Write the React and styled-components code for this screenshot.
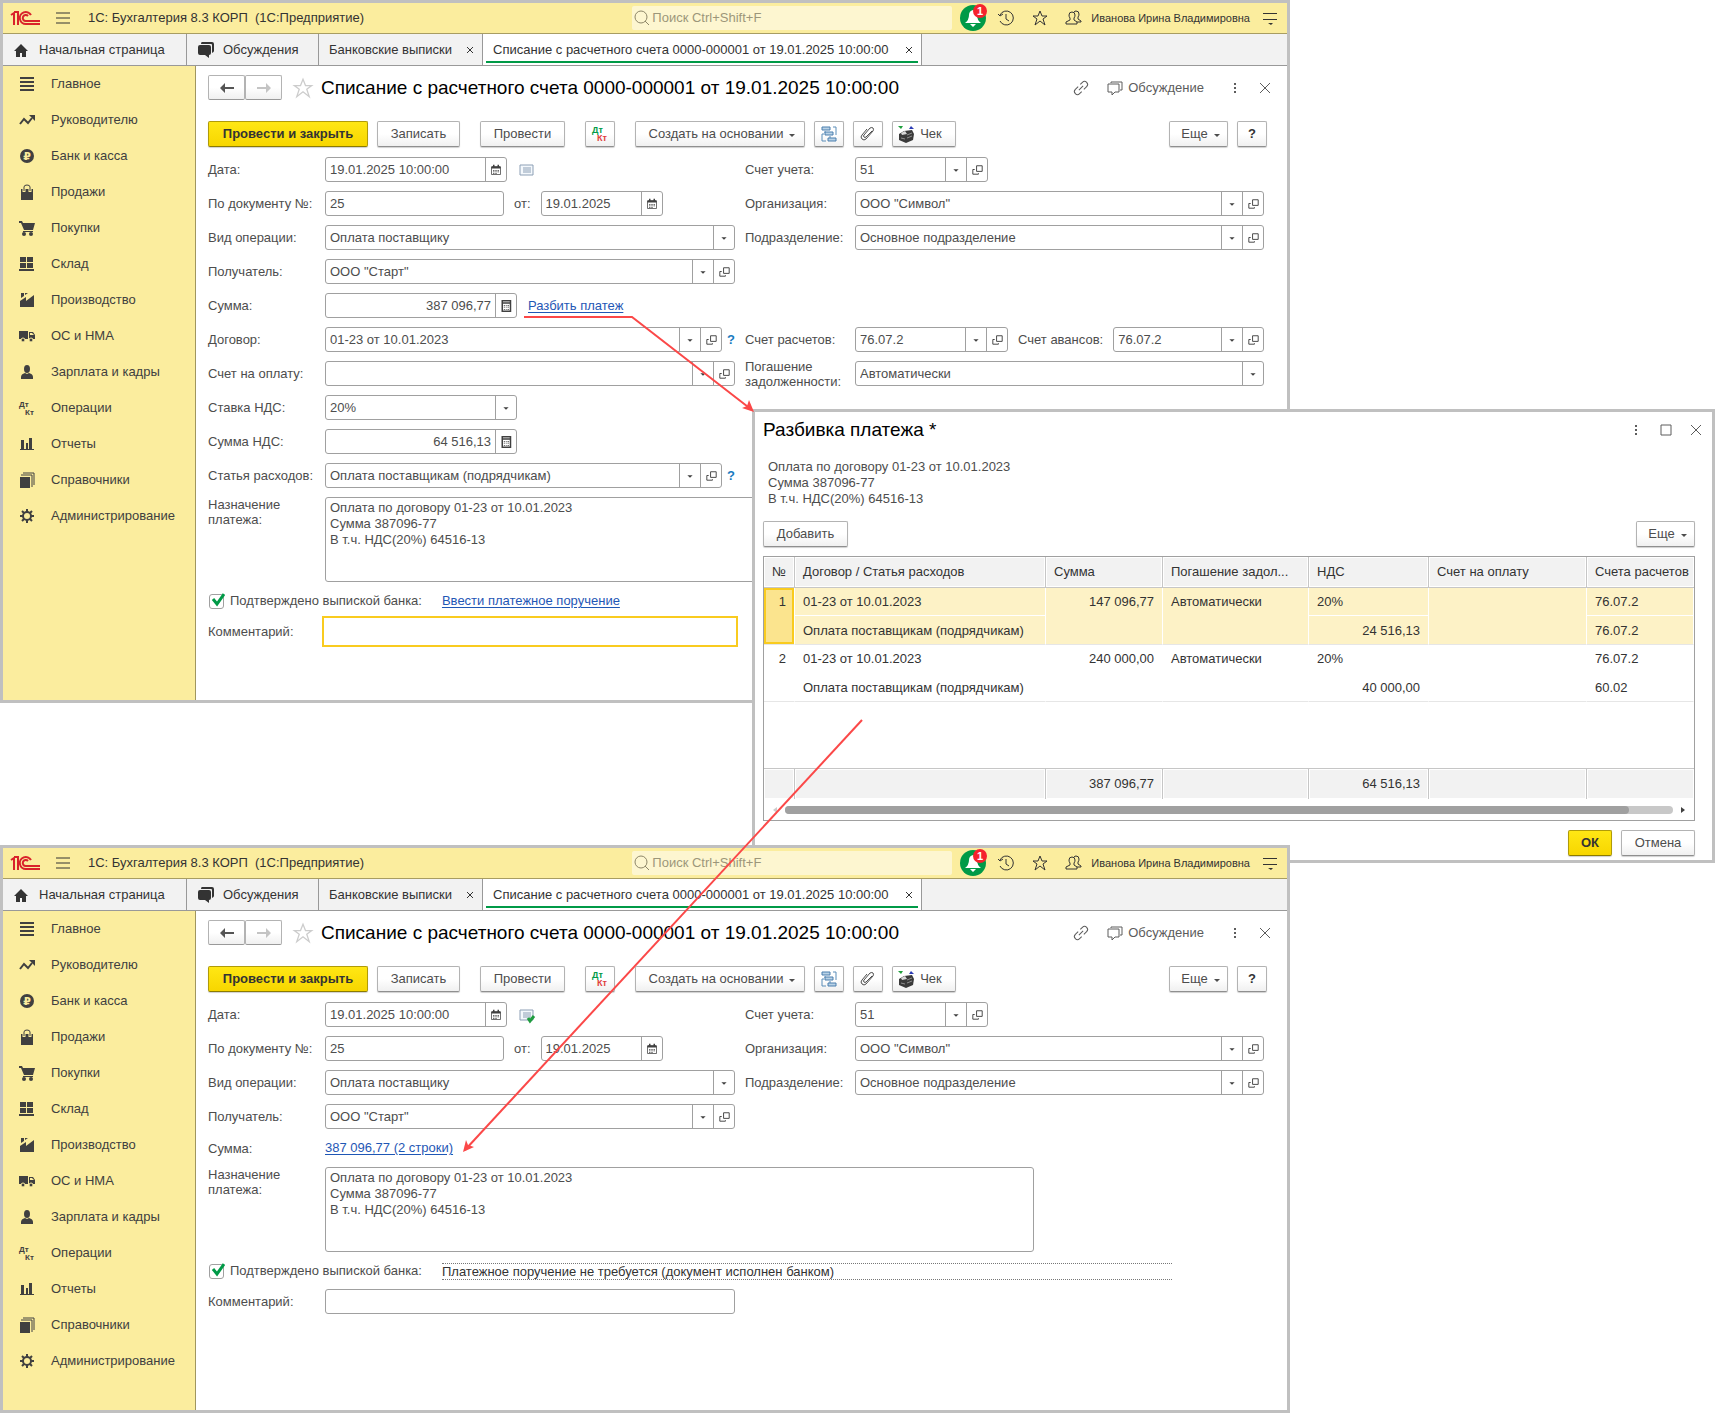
import React, { useId } from "react";
import styled, { createGlobalStyle, css } from "styled-components";

const sections = [
  { icon: "list", title: "Главное" },
  { icon: "trend", title: "Руководителю" },
  { icon: "ruble", title: "Банк и касса" },
  { icon: "bag", title: "Продажи" },
  { icon: "cart", title: "Покупки" },
  { icon: "store", title: "Склад" },
  { icon: "factory", title: "Производство" },
  { icon: "truck", title: "ОС и НМА" },
  { icon: "person", title: "Зарплата и кадры" },
  { icon: "dtkt", title: "Операции" },
  { icon: "bars", title: "Отчеты" },
  { icon: "books", title: "Справочники" },
  { icon: "gear", title: "Администрирование" },
];

const docTitle = "Списание с расчетного счета 0000-000001 от 19.01.2025 10:00:00";
const purpose = "Оплата по договору 01-23 от 10.01.2023\nСумма 387096-77\nВ т.ч. НДС(20%) 64516-13";

const splitRows = [
  { n: 1, contract: "01-23 от 10.01.2023", item: "Оплата поставщикам (подрядчикам)", sum: "147 096,77", repay: "Автоматически", rate: "20%", vat: "24 516,13", acc: "76.07.2", adv: "76.07.2" },
  { n: 2, contract: "01-23 от 10.01.2023", item: "Оплата поставщикам (подрядчикам)", sum: "240 000,00", repay: "Автоматически", rate: "20%", vat: "40 000,00", acc: "76.07.2", adv: "60.02" },
];

/* ---------- icons ---------- */

const shapes = {
  list: <path d="M1 1h14v2H1zM1 5h14v2H1zM1 9h14v2H1zM1 13h14v2H1z" />,
  trend: (
    <>
      <path d="M1 12l4-5 4 4 4-5" fill="none" stroke="currentColor" strokeWidth="2" />
      <path d="M10 3h6v6z" />
    </>
  ),
  ruble: (
    <>
      <circle cx="8" cy="8" r="7" />
      <text x="8" y="12" textAnchor="middle" fontSize="11" fontWeight="bold" fontFamily="DejaVu Sans, sans-serif" fill="#fbed9e">₽</text>
    </>
  ),
  bag: (
    <>
      <path d="M2 5h12v11H2z" />
      <path d="M5 8V3q0-2 3-2t3 2v5" fill="none" stroke="#fbed9e" strokeWidth="3" />
      <path d="M5 7V3q0-2 3-2t3 2v4" fill="none" stroke="currentColor" strokeWidth="1" />
    </>
  ),
  cart: (
    <>
      <path d="M0 1h3l1 2h12l-2 7H5L2 3H0z" />
      <path d="M4 11h10v1H4z" />
      <circle cx="5" cy="14" r="2" />
      <circle cx="12" cy="14" r="2" />
    </>
  ),
  store: <path d="M1 1h6v5H1zM8 1h6v5H8zM1 7h6v5H1zM8 7h6v5H8zM0 13h15v2H0z" />,
  factory: <path d="M1 15V9l6-4v4l8-6v12zM2 1h3v3L2 6zM6 1h3L6 3z" />,
  truck: (
    <>
      <path d="M0 3h9v8H0zM10 4h4l2 3v4h-6z" />
      <path d="M11 5h2l2 2h-4z" fill="#fbed9e" />
      <circle cx="4" cy="12" r="2" stroke="#fbed9e" />
      <circle cx="12" cy="12" r="2" stroke="#fbed9e" />
    </>
  ),
  person: (
    <>
      <ellipse cx="8" cy="5" rx="3" ry="4" />
      <path d="M2 15v-2q0-3 4-4l2 1 2-1q4 1 4 4v2z" />
    </>
  ),
  dtkt: (
    <g fontSize="8" fontWeight="bold" fontFamily="Liberation Sans, sans-serif">
      <text x="0" y="7">Дт</text>
      <text x="6" y="15">Кт</text>
    </g>
  ),
  bars: <path d="M2 4h3v9H2zM7 7h2v6H7zM10 2h3v11h-3zM1 13h14v1H1z" />,
  books: (
    <>
      <path d="M1 5h10v11H1z" />
      <path d="M2 3h11v12M4 1h11v12" fill="none" stroke="currentColor" />
    </>
  ),
  gear: (
    <g fill="none" stroke="currentColor">
      <circle cx="8" cy="8" r="4" strokeWidth="2" />
      <path d="M8 1v3M8 12v3M1 8h3M12 8h3M3 3l2 2M11 11l2 2M13 3l-2 2M3 13l2-2" strokeWidth="2" />
    </g>
  ),
  home: <path d="M8 2l7 7h-2v6H9v-4H7v4H3V9H1z" />,
  chats: (
    <>
      <path d="M5 0h10q2 0 2 2v7q0 1-2 2V3q0-1-1-1H4q0-2 1-2z" />
      <path d="M3 3h9q2 0 2 2v6q0 2-2 2v3l-4-3H3q-2 0-2-2V5q0-2 2-2z" />
    </>
  ),
  burger: <path d="M1 3h14M1 8h14M1 13h14" stroke="currentColor" />,
  search: <path d="M11 11l4 4M13 7A6 6 0 1 1 1 7a6 6 0 0 1 12 0z" fill="none" stroke="currentColor" />,
  history: (
    <g fill="none" stroke="currentColor">
      <path d="M2 5a7 7 0 1 1 0 6M8 4v5l3 2" />
      <path d="M0 4l2 2 3-2" />
    </g>
  ),
  star: <path d="M8 1l2 5h5l-4 3 2 6-5-4-5 4 2-6-4-3h5z" fill="none" stroke="currentColor" />,
  users: (
    <g fill="none" stroke="currentColor">
      <path d="M6 2q3 0 3 3 0 2-1 3v2l3 2v2H0v-2l4-2V8Q3 7 3 5q0-3 3-3z" />
      <path d="M8 2q1-1 2-1 3 0 3 3 0 2-1 3v2l3 2v1h-4" />
    </g>
  ),
  panel: <path d="M1 3h14v1H1zM1 9h14v1H1zM6 13h5l-2 2z" />,
  link: (
    <g fill="none" stroke="currentColor" transform="rotate(-45 8 8)">
      <path d="M7 5H3a3 3 0 0 0 0 6h3M9 11h4a3 3 0 0 0 0-6h-3M5 8h6" />
    </g>
  ),
  discuss: (
    <g fill="none" stroke="currentColor">
      <path d="M1 4h11v8H8l-3 3v-3H1z" />
      <path d="M4 3V2h11v8h-2" />
    </g>
  ),
  dots: <path d="M7 3h2v2H7zM7 7h2v2H7zM7 11h2v2H7z" />,
  close: <path d="M3 3l10 10M13 3L3 13" stroke="currentColor" />,
  cross: <path d="M5 5l6 6M11 5l-6 6" stroke="currentColor" />,
  square: <path d="M3 3h10v10H3z" fill="none" stroke="currentColor" />,
  left: <path d="M1 8l5-5v4h9v2H6v4z" />,
  right: <path d="M15 8l-5-5v4H1v2h9v4z" />,
  caret: <path d="M5 7h6l-3 3z" />,
  open: <path d="M7 4h6v6H7zM5 8H3v5h6v-1" fill="none" stroke="currentColor" />,
  calendar: (
    <>
      <path d="M2 4h12v10H2z" fill="none" stroke="currentColor" />
      <path d="M2 3h12v3H2zM4 1h2v3H4zM10 1h2v3h-2zM4 8h2v1H4zM7 8h2v1H7zM10 8h2v1h-2zM4 10h2v1H4zM7 10h2v1H7zM10 10h2v1h-2zM4 12h2v1H4zM7 12h2v1H7z" />
    </>
  ),
  calc: (
    <>
      <path d="M3 1h11v14H3z" fill="none" stroke="currentColor" strokeWidth="2" />
      <path d="M3 3h11v2H3zM5 7h2v1H5zM8 7h1v1H8zM10 7h2v1h-2zM5 9h2v1H5zM8 9h1v1H8zM10 9h2v1h-2zM5 12h2v1H5zM8 12h1v1H8zM10 12h2v1h-2z" />
    </>
  ),
  posting: (
    <g fill="none" stroke="#8c9fb5">
      <path d="M1 3h13v10H1z" fill="#f4f8fc" />
      <path d="M4 6h8M4 8h8M4 10h8" />
    </g>
  ),
  posted: (
    <g fill="none" stroke="#8c9fb5">
      <path d="M1 3h13v10H1z" fill="#f4f8fc" />
      <path d="M4 6h8M4 8h8M4 10h8" />
      <path d="M9 11l2 3 4-5" stroke="#1f9c3f" strokeWidth="3" />
    </g>
  ),
  structure: (
    <>
      <path d="M3 8H1v7h4M12 1h3v8M4 5v2M9 10v2" fill="none" stroke="#5b8db8" />
      <path d="M1 1h8v3H1zM4 6h8v3H4zM7 12h8v3H7z" fill="#b9d2e6" stroke="#4a7fae" />
    </>
  ),
  clip: (
    <path d="M12 5l-6 6q-1 1-2 0t0-2l6-7q2-1 3 0t0 3l-7 8q-2 2-4 0t0-4l5-6" fill="none" stroke="currentColor" />
  ),
  till: (
    <>
      <path d="M0 0h5L3 3z" fill="#1fa03c" />
      <path d="M11 3l2-3 3 3z" fill="#2b3bb5" />
      <path d="M1 8l5-3 8-1 2 4-1 6-7 3-7-3z" fill="#3a3a3a" />
      <path d="M3 7l4-2 2 3-5 1z" fill="#d8d8d8" />
      <path d="M9 9l5-2M9 12l5-2M3 12l4 1" stroke="#909090" />
    </>
  ),
};

const Svg = styled.svg`
  display: block;
  flex: none;
  fill: currentColor;
  overflow: visible;
`;

const Icon = ({ name, size = 16 }) => (
  <Svg width={size} height={size} viewBox="0 0 16 16" aria-hidden="true">
    {shapes[name]}
  </Svg>
);

const Logo = () => (
  <Svg width="30" height="16" viewBox="0 0 30 16" role="img" aria-label="1С">
    <g fill="none" stroke="#d9232b" strokeWidth="2">
      <path d="M0 5l3-2v12M3 2h4v13" />
      <path d="M20 5a6 6 0 1 0-5 9h14" />
      <path d="M17 6a3 3 0 1 0-2 5h14" />
    </g>
  </Svg>
);

const Bell = () => (
  <Svg width="28" height="30" viewBox="0 0 28 30" aria-hidden="true">
    <circle cx="13" cy="15" r="13" fill="#009a47" />
    <path d="M13 7q4 1 4 5 0 5 4 8H5q4-3 4-8 0-4 4-5zM10 21h6l-3 3z" fill="#fff" />
    <circle cx="20" cy="8" r="7" fill="#f5222d" />
    <text x="20" y="12" textAnchor="middle" fontSize="11" fontWeight="bold" fontFamily="Liberation Sans, sans-serif" fill="#fff">1</text>
  </Svg>
);

const DtKt = () => (
  <Svg width="16" height="16" viewBox="0 0 16 16" aria-hidden="true">
    <g fontSize="9" fontWeight="bold" fontFamily="Liberation Sans, sans-serif">
      <text x="0" y="7" fill="#009a47">Дт</text>
      <text x="5" y="15" fill="#e03c3c">Кт</text>
    </g>
  </Svg>
);

const Drop = () => (
  <DropSvg width="6" height="3" viewBox="0 0 6 3" aria-hidden="true">
    <path d="M0 0h6L3 3z" />
  </DropSvg>
);

/* ---------- form parts ---------- */

const Pick = ({ id, value, grow, w, open = true }) => (
  <Box $grow={grow} $w={w}>
    <Select id={id} defaultValue={value}>
      <option>{value}</option>
    </Select>
    <Segment as="span"><Icon name="caret" size={14} /></Segment>
    {open && <Segment type="button" aria-label="Открыть"><Icon name="open" size={15} /></Segment>}
  </Box>
);

const Entry = ({ id, value, w, icon, label, right }) => (
  <Box $w={w}>
    <Input id={id} defaultValue={value} $right={right} />
    {icon && <Segment type="button" aria-label={label}><Icon name={icon} size={12} /></Segment>}
  </Box>
);

const Footer = ({ id, confirm, focused }) => (
  <>
    <Row $top>
      <Label htmlFor={`${id}-purpose`}>Назначение платежа:</Label>
      <Purpose id={`${id}-purpose`} defaultValue={purpose} />
    </Row>
    <Confirm>
      <CheckLabel>
        <CheckBox type="checkbox" defaultChecked />
        <Mark width="15" height="15" viewBox="0 0 15 15" aria-hidden="true">
          <path d="M3 6l4 5 7-10" fill="none" stroke="#009a47" strokeWidth="3" />
        </Mark>
        Подтверждено выпиской банка:
      </CheckLabel>
      {confirm}
    </Confirm>
    <Row>
      <Label htmlFor={`${id}-comment`}>Комментарий:</Label>
      <Comment id={`${id}-comment`} $focused={focused} />
    </Row>
  </>
);

const Fields = ({ split }) => {
  const id = useId();
  return (
    <form>
      <Grid>
        <Row>
          <Label htmlFor={`${id}-date`}>Дата:</Label>
          <Entry id={`${id}-date`} value="19.01.2025 10:00:00" w={182} icon="calendar" label="Выбрать дату" />
          <State><Icon name={split ? "posted" : "posting"} /></State>
        </Row>
        <Row $col={2} $row={1}>
          <Label htmlFor={`${id}-acc`} $narrow>Счет учета:</Label>
          <Pick id={`${id}-acc`} value="51" w={133} />
        </Row>
        <Row>
          <Label htmlFor={`${id}-num`}>По документу №:</Label>
          <Entry id={`${id}-num`} value="25" w={179} />
          <InlineLabel htmlFor={`${id}-from`}>от:</InlineLabel>
          <Entry id={`${id}-from`} value="19.01.2025" w={122} icon="calendar" label="Выбрать дату" />
        </Row>
        <Row $col={2} $row={2}>
          <Label htmlFor={`${id}-org`} $narrow>Организация:</Label>
          <Pick id={`${id}-org`} value={'ООО "Символ"'} grow />
        </Row>
        <Row>
          <Label htmlFor={`${id}-kind`}>Вид операции:</Label>
          <Pick id={`${id}-kind`} value="Оплата поставщику" grow open={false} />
        </Row>
        <Row $col={2} $row={3}>
          <Label htmlFor={`${id}-dep`} $narrow>Подразделение:</Label>
          <Pick id={`${id}-dep`} value="Основное подразделение" grow />
        </Row>
        <Row>
          <Label htmlFor={`${id}-payee`}>Получатель:</Label>
          <Pick id={`${id}-payee`} value={'ООО "Старт"'} grow />
        </Row>
        {split ? (
          <Row $short>
            <Label as="span">Сумма:</Label>
            <Link href="#split">387 096,77 (2 строки)</Link>
          </Row>
        ) : (
          <>
            <Row>
              <Label htmlFor={`${id}-sum`}>Сумма:</Label>
              <Entry id={`${id}-sum`} value="387 096,77" w={192} icon="calc" label="Калькулятор" right />
              <Gap />
              <Link href="#split">Разбить платеж</Link>
            </Row>
            <Row>
              <Label htmlFor={`${id}-contract`}>Договор:</Label>
              <Pick id={`${id}-contract`} value="01-23 от 10.01.2023" grow />
              <Hint type="button">?</Hint>
            </Row>
            <Row $col={2} $row={6}>
              <Label htmlFor={`${id}-settle`} $narrow>Счет расчетов:</Label>
              <Pick id={`${id}-settle`} value="76.07.2" w={153} />
              <InlineLabel htmlFor={`${id}-advance`}>Счет авансов:</InlineLabel>
              <Pick id={`${id}-advance`} value="76.07.2" grow />
            </Row>
            <Row>
              <Label htmlFor={`${id}-bill`}>Счет на оплату:</Label>
              <Pick id={`${id}-bill`} value="" grow />
            </Row>
            <Row $col={2} $row={7}>
              <Label htmlFor={`${id}-repay`} $narrow>Погашение задолженности:</Label>
              <Pick id={`${id}-repay`} value="Автоматически" grow open={false} />
            </Row>
            <Row>
              <Label htmlFor={`${id}-rate`}>Ставка НДС:</Label>
              <Pick id={`${id}-rate`} value="20%" w={192} open={false} />
            </Row>
            <Row>
              <Label htmlFor={`${id}-vat`}>Сумма НДС:</Label>
              <Entry id={`${id}-vat`} value="64 516,13" w={192} icon="calc" label="Калькулятор" right />
            </Row>
            <Row>
              <Label htmlFor={`${id}-item`}>Статья расходов:</Label>
              <Pick id={`${id}-item`} value="Оплата поставщикам (подрядчикам)" grow />
              <Hint type="button">?</Hint>
            </Row>
          </>
        )}
      </Grid>
      <Footer
        id={id}
        focused={!split}
        confirm={
          split ? (
            <Dotted>Платежное поручение не требуется (документ исполнен банком)</Dotted>
          ) : (
            <Link href="#order">Ввести платежное поручение</Link>
          )
        }
      />
    </form>
  );
};

/* ---------- windows ---------- */

const MainWindow = ({ area, split }) => (
  <Window $area={area} $layer={split ? 3 : 1}>
    <TopBar>
      <Logo />
      <Plain type="button" aria-label="Меню"><Icon name="burger" /></Plain>
      <AppName>1С: Бухгалтерия 8.3 КОРП&nbsp; (1С:Предприятие)</AppName>
      <Search>
        <Icon name="search" />
        <SearchInput placeholder="Поиск Ctrl+Shift+F" aria-label="Поиск" />
      </Search>
      <Plain type="button" aria-label="Уведомления"><Bell /></Plain>
      <TopTools>
        <Plain type="button" aria-label="История"><Icon name="history" /></Plain>
        <Plain type="button" aria-label="Избранное"><Icon name="star" /></Plain>
        <Plain type="button" aria-label="Пользователи"><Icon name="users" /></Plain>
      </TopTools>
      <User>Иванова Ирина Владимировна</User>
      <Plain type="button" aria-label="Панели"><Icon name="panel" /></Plain>
    </TopBar>
    <Tabs>
      <Tab type="button" $w={184}><Icon name="home" />Начальная страница</Tab>
      <Tab type="button" $w={132}><Icon name="chats" />Обсуждения</Tab>
      <Tab type="button" $w={161} $doc>Банковские выписки<Icon name="cross" /></Tab>
      <Tab type="button" $w={439} $doc $active>{docTitle}<Icon name="cross" /></Tab>
    </Tabs>
    <Main>
      <Sidebar>
        {sections.map((s) => (
          <Section key={s.title} href="#section">
            <Icon name={s.icon} />
            {s.title}
          </Section>
        ))}
      </Sidebar>
      <Page>
        <Heading>
          <Nav>
            <NavButton type="button" aria-label="Назад"><Icon name="left" /></NavButton>
            <NavButton type="button" aria-label="Вперед" $off><Icon name="right" /></NavButton>
          </Nav>
          <Fav type="button" aria-label="В избранное"><Icon name="star" size={20} /></Fav>
          <Title>{docTitle}</Title>
          <HeadTools>
            <Plain type="button" aria-label="Ссылка"><Icon name="link" /></Plain>
            <Plain type="button"><Icon name="discuss" />Обсуждение</Plain>
          </HeadTools>
          <WindowTools>
            <Plain type="button" aria-label="Еще"><Icon name="dots" /></Plain>
            <Plain type="button" aria-label="Закрыть"><Icon name="close" /></Plain>
          </WindowTools>
        </Heading>
        <Toolbar>
          <Group>
            <Button type="button" $w={160} $primary>Провести и закрыть</Button>
            <Button type="button" $w={83}>Записать</Button>
          </Group>
          <Button type="button" $w={85}>Провести</Button>
          <Button type="button" $w={30} aria-label="Дт/Кт"><DtKt /></Button>
          <Group>
            <Button type="button" $w={170} $drop>Создать на основании<Drop /></Button>
            <Button type="button" $w={30} aria-label="Структура"><Icon name="structure" /></Button>
            <Button type="button" $w={30} aria-label="Файлы"><Icon name="clip" /></Button>
            <Till type="button" $w={64}><Icon name="till" />Чек</Till>
          </Group>
          <Group $end>
            <Button type="button" $w={59} $drop>Еще<Drop /></Button>
            <Button type="button" $w={30} $bold>?</Button>
          </Group>
        </Toolbar>
        <Fields split={split} />
      </Page>
    </Main>
  </Window>
);

const SplitDialog = () => (
  <Window as="section" $area="2 / 2 / 5 / 4" $layer={2}>
    <DialogBody>
      <DialogHead>
        <Title>Разбивка платежа *</Title>
        <WindowTools>
          <Plain type="button" aria-label="Еще"><Icon name="dots" /></Plain>
          <Plain type="button" aria-label="Развернуть"><Icon name="square" /></Plain>
          <Plain type="button" aria-label="Закрыть"><Icon name="close" /></Plain>
        </WindowTools>
      </DialogHead>
      <Note>{purpose}</Note>
      <DialogBar>
        <Button type="button" $w={85}>Добавить</Button>
        <Button type="button" $w={59} $drop>Еще<Drop /></Button>
      </DialogBar>
      <TableFrame>
        <Table>
          <colgroup>
            <Col $w={31} />
            <Col $w={251} />
            <Col $w={117} />
            <Col $w={146} />
            <Col $w={120} />
            <Col $w={158} />
            <Col $w={107} />
          </colgroup>
          <thead>
            <tr>
              <Th>№</Th>
              <Th>Договор / Статья расходов</Th>
              <Th>Сумма</Th>
              <Th title="Погашение задолженности">Погашение задол...</Th>
              <Th>НДС</Th>
              <Th>Счет на оплату</Th>
              <Th>Счета расчетов</Th>
            </tr>
          </thead>
          <tbody>
            {splitRows.map((r) => {
              const on = r.n === 1;
              return (
                <React.Fragment key={r.n}>
                  <tr>
                    <Td rowSpan={2} $on={on} $right $last $current={on}>{r.n}</Td>
                    <Td $on={on}>{r.contract}</Td>
                    <Td rowSpan={2} $on={on} $right $last>{r.sum}</Td>
                    <Td rowSpan={2} $on={on} $last>{r.repay}</Td>
                    <Td $on={on}>{r.rate}</Td>
                    <Td rowSpan={2} $on={on} $last />
                    <Td $on={on}>{r.acc}</Td>
                  </tr>
                  <tr>
                    <Td $on={on} $last $low>{r.item}</Td>
                    <Td $on={on} $last $low $right>{r.vat}</Td>
                    <Td $on={on} $last $low>{r.adv}</Td>
                  </tr>
                </React.Fragment>
              );
            })}
            <tr>
              <Blank colSpan={7} />
            </tr>
          </tbody>
          <tfoot>
            <tr>
              <Total />
              <Total />
              <Total>387 096,77</Total>
              <Total />
              <Total>64 516,13</Total>
              <Total />
              <Total />
            </tr>
          </tfoot>
        </Table>
        <Scroll>
          <ScrollArrow $left $off />
          <Track><Thumb /></Track>
          <ScrollArrow />
        </Scroll>
      </TableFrame>
      <DialogButtons>
        <Button type="button" $w={44} $primary>ОК</Button>
        <Button type="button" $w={74}>Отмена</Button>
      </DialogButtons>
    </DialogBody>
  </Window>
);

const App = () => (
  <>
    <GlobalStyle />
    <Desktop>
      <MainWindow area="1 / 1 / 3 / 3" />
      <SplitDialog />
      <MainWindow area="4 / 1 / 6 / 3" split />
      <Arrows viewBox="0 0 1715 1413" preserveAspectRatio="none" aria-hidden="true">
        <g fill="none" stroke="#fb4848" strokeWidth="2">
          <path d="M524 317h108l120 93" />
          <path d="M862 720L465 1150" />
        </g>
        <path d="M754 412l-12-4 5-2 2-6zM463 1152l3-12 2 5 6 2z" fill="#fb4848" />
      </Arrows>
    </Desktop>
  </>
);

export default App;

const GlobalStyle = createGlobalStyle`
  *, *::before, *::after {
    box-sizing: border-box;
  }
  body {
    margin: 0;
    background: #fff;
    color: #4d4d4d;
    font: 13px/16px "Liberation Sans", Arial, sans-serif;
  }
  button, input, select, textarea {
    margin: 0;
    font: inherit;
    color: inherit;
  }
`;

const Desktop = styled.div`
  position: relative;
  display: grid;
  grid-template-columns: 752fr 538fr 425fr;
  grid-template-rows:
    minmax(409px, auto) minmax(294px, auto) minmax(142px, auto)
    minmax(18px, auto) minmax(550px, auto);
`;

const Window = styled.div`
  display: flex;
  flex-direction: column;
  grid-area: ${(p) => p.$area};
  z-index: ${(p) => p.$layer};
  min-width: 0;
  border: 3px solid #c0c0c0;
  background: #fff;
`;

const Arrows = styled.svg`
  position: absolute;
  inset: 0;
  z-index: 4;
  width: 100%;
  height: 100%;
  pointer-events: none;
`;

const DropSvg = styled(Svg)`
  margin-top: 3px;
`;

const Plain = styled.button`
  display: flex;
  align-items: center;
  gap: 5px;
  padding: 0;
  border: 0;
  background: none;
`;

const TopBar = styled.header`
  display: flex;
  align-items: center;
  gap: 14px;
  height: 31px;
  padding: 0 9px 0 8px;
  border-bottom: 1px solid #a89d62;
  background: #fbed9e;
  color: #333;
`;

const AppName = styled.span`
  flex: none;
  margin: 0 auto 0 3px;
`;

const Search = styled.label`
  display: flex;
  align-items: center;
  gap: 2px;
  width: 320px;
  height: 24px;
  margin-right: -6px;
  padding-left: 2px;
  border-radius: 2px;
  background: #fdf6d0;
  color: #8d8668;
`;

const SearchInput = styled.input`
  flex: 1;
  min-width: 0;
  padding: 0;
  border: 0;
  background: none;

  &::placeholder {
    color: #9c967a;
  }
`;

const TopTools = styled.div`
  display: flex;
  align-items: center;
  gap: 18px;
  margin: 0 -3px 0 -4px;
`;

const User = styled.span`
  margin: 0 -2px;
  font-size: 11px;
  white-space: nowrap;
`;

const Tabs = styled.nav`
  display: flex;
  height: 32px;
  border-bottom: 1px solid #999;
  background: #f2f2f2;
`;

const Tab = styled.button`
  display: flex;
  align-items: center;
  justify-content: ${(p) => (p.$doc ? "space-between" : "flex-start")};
  gap: 10px;
  min-width: ${(p) => p.$w}px;
  padding: ${(p) => (p.$doc ? "0 4px 0 10px" : "0 10px")};
  border: 0;
  border-right: 1px solid #999;
  background: ${(p) => (p.$active ? "linear-gradient(#009a47, #009a47) 50% 27px / calc(100% - 6px) 2px no-repeat #fff" : "none")};
  color: #333;
  white-space: nowrap;
`;

const Main = styled.div`
  display: flex;
  flex: 1;
`;

const Sidebar = styled.nav`
  flex: none;
  width: 193px;
  border-right: 1px solid #a0965f;
  background: #fbed9e;
`;

const Section = styled.a`
  display: flex;
  align-items: center;
  gap: 16px;
  height: 36px;
  padding-left: 16px;
  color: #404040;
  text-decoration: none;
  white-space: nowrap;
`;

const Page = styled.main`
  flex: 1;
  min-width: 0;
  padding: 9px 23px 0 12px;
`;

const Heading = styled.div`
  display: flex;
  align-items: center;
  height: 25px;
`;

const Nav = styled.div`
  display: flex;
`;

const NavButton = styled.button`
  display: flex;
  align-items: center;
  justify-content: center;
  width: 37px;
  height: 25px;
  padding: 0;
  border: 1px solid #b3b3b3;
  border-bottom-color: #999;
  border-radius: 2px;
  background: linear-gradient(#fff 50%, #f0f0f0);
  color: ${(p) => (p.$off ? "#c4c4c4" : "#555")};
`;

const Fav = styled(Plain)`
  margin: 0 8px 0 11px;
  color: #ccc;
`;

const Title = styled.h1`
  margin: 0;
  color: #000;
  font-size: 19px;
  font-weight: normal;
  line-height: 22px;
  white-space: nowrap;
`;

const HeadTools = styled.div`
  display: flex;
  gap: 18px;
  margin: 0 23px 0 auto;
  color: #5c5c5c;
`;

const WindowTools = styled.div`
  display: flex;
  gap: 14px;
  margin-right: -9px;
  color: #5c5c5c;
`;

const Toolbar = styled.div`
  display: flex;
  gap: 20px;
  margin: 21px 0 10px;
`;

const Group = styled.div`
  display: flex;
  gap: 9px;
  ${(p) => p.$end && "margin: 0 -3px 0 auto;"}
`;

const Button = styled.button`
  display: flex;
  align-items: center;
  justify-content: center;
  gap: 6px;
  min-width: ${(p) => p.$w}px;
  height: 26px;
  padding: 0 0 0 ${(p) => (p.$drop ? "4px" : "0")};
  border: 1px solid ${(p) => (p.$primary ? "#b09b08" : "#b3b3b3")};
  border-bottom-color: ${(p) => (p.$primary ? "#8c7b00" : "#8f8f8f")};
  border-radius: 2px;
  background: ${(p) => (p.$primary ? "linear-gradient(#ffe714, #f7d600)" : "linear-gradient(#fff 50%, #f0f0f0)")};
  box-shadow: 0 1px 1px #d0d0d0;
  color: ${(p) => (p.$primary || p.$bold ? "#333" : "#4d4d4d")};
  font-weight: ${(p) => (p.$primary || p.$bold ? "bold" : "normal")};
  white-space: nowrap;
`;

const Till = styled(Button)`
  padding-right: 8px;
`;

const Grid = styled.div`
  display: grid;
  grid-template-columns: minmax(0, 527fr) minmax(0, 519fr);
  gap: 9px 10px;
  margin-bottom: 9px;
`;

const Row = styled.div`
  display: flex;
  align-items: ${(p) => (p.$top ? "flex-start" : "center")};
  ${(p) => !p.$top && `height: ${p.$short ? 20 : 25}px;`}
  grid-column: ${(p) => p.$col || 1};
  ${(p) => p.$row && `grid-row: ${p.$row};`}
`;

const Label = styled.label`
  flex: none;
  width: ${(p) => (p.$narrow ? "110px" : "117px")};
  padding-right: 6px;
  line-height: 15px;
`;

const InlineLabel = styled.label`
  margin: 0 10px;
  white-space: nowrap;
`;

const frame = css`
  border: 1px solid #a0a0a0;
  border-radius: 3px;
  background: #fff;
`;

const Box = styled.div`
  ${frame}
  display: flex;
  flex: ${(p) => (p.$grow ? "1 1 0" : `0 1 ${p.$w}px`)};
  min-width: 0;
  height: 25px;
`;

const Input = styled.input`
  flex: 1;
  width: 0;
  padding: 0 4px;
  border: 0;
  background: none;
  text-align: ${(p) => (p.$right ? "right" : "left")};
`;

const Select = styled.select`
  flex: 1;
  width: 0;
  padding: 0 4px;
  border: 0;
  background: none;
  appearance: none;
`;

const Segment = styled.button`
  display: flex;
  flex: none;
  align-items: center;
  justify-content: center;
  width: 21px;
  padding: 0;
  border: 0;
  border-left: 1px solid #a0a0a0;
  background: none;
  color: #404040;
`;

const State = styled.span`
  margin-left: 12px;
`;

const Gap = styled.span`
  width: 11px;
`;

const Hint = styled.button`
  margin-left: 5px;
  padding: 0;
  border: 0;
  background: none;
  color: #1a7bbf;
  font-weight: bold;
`;

const Link = styled.a`
  color: #1f57b5;
  text-decoration: underline;
  text-underline-offset: 2px;
`;

const Purpose = styled.textarea`
  ${frame}
  flex: 0 1 709px;
  height: 85px;
  padding: 2px 4px;
  resize: none;
`;

const Confirm = styled.div`
  display: flex;
  align-items: center;
  gap: 20px;
  margin: 9px 0 8px;
`;

const CheckLabel = styled.label`
  position: relative;
  display: flex;
  align-items: center;
  gap: 6px;
  height: 20px;
  padding-left: 1px;
`;

const CheckBox = styled.input`
  ${frame}
  width: 15px;
  height: 15px;
  appearance: none;
`;

/* the tick sticks out of its box */
const Mark = styled.svg`
  position: absolute;
  top: 2px;
  left: 2px;
  pointer-events: none;
`;

const Dotted = styled.span`
  flex: 0 1 730px;
  border: 1px dotted #777;
  border-width: 1px 0;
  color: #333;
  line-height: 15px;
`;

const Comment = styled.input`
  ${frame}
  flex: 0 1 410px;
  min-width: 0;
  height: 25px;
  padding: 0 4px;
  ${(p) =>
    p.$focused &&
    css`
      border-color: #fff;
      border-radius: 0;
      outline: 2px solid #f9cb1f;
      outline-offset: 1px;
    `}
`;

const DialogBody = styled.div`
  display: flex;
  flex: 1;
  flex-direction: column;
  padding: 0 17px 4px 8px;
`;

const DialogHead = styled.div`
  display: flex;
  align-items: center;
  justify-content: space-between;
  height: 36px;
`;

const Note = styled.p`
  margin: 11px 5px 14px;
  white-space: pre-line;
`;

const DialogBar = styled.div`
  display: flex;
  justify-content: space-between;
  margin-bottom: 9px;
`;

const TableFrame = styled.div`
  overflow: hidden;
  border: 1px solid #a0a0a0;
`;

const Table = styled.table`
  width: 100%;
  border-spacing: 0;
  table-layout: fixed;
  color: #333;
`;

const Col = styled.col`
  width: ${(p) => p.$w}px;
`;

const cell = css`
  overflow: hidden;
  border-right: 1px solid #c6c6c6;
  background: #f2f2f2;
  box-shadow: inset 0 0 0 1px #fff;
  font-weight: normal;

  &:last-child {
    border-right: 0;
  }
`;

const Th = styled.th`
  ${cell}
  height: 31px;
  padding: 0 8px;
  border-bottom: 1px solid #c6c6c6;
  text-align: left;
  text-overflow: ellipsis;
  white-space: nowrap;

  &:last-child {
    padding-right: 0;
  }
`;

const Td = styled.td`
  height: ${(p) => (p.$last ? "29px" : "28px")};
  padding: ${(p) => (p.$low ? "7px 8px 4px" : "6px 8px 5px")};
  border-right: 1px solid #fff;
  border-bottom: 1px solid ${(p) => (p.$last ? "#e6e6e6" : "#fff")};
  background: ${(p) => (p.$current ? "#fbe48e" : p.$on ? "#fdf2c6" : "#fff")};
  ${(p) => p.$current && "box-shadow: inset 0 0 0 2px #f9cb1f;"}
  text-align: ${(p) => (p.$right ? "right" : "left")};
  vertical-align: top;
  white-space: nowrap;
`;

const Blank = styled.td`
  height: 67px;
  padding: 0;
  border-bottom: 1px solid #c6c6c6;
`;

const Total = styled.td`
  ${cell}
  height: 30px;
  padding: 0 8px;
  text-align: right;
`;

const Scroll = styled.div`
  display: flex;
  align-items: center;
  gap: 8px;
  height: 21px;
  padding: 0 9px;
`;

const Track = styled.div`
  flex: 1;
  height: 8px;
  border-radius: 4px;
  background: #c8c8c8;
`;

const Thumb = styled.div`
  width: 95%;
  height: 8px;
  border-radius: 4px;
  background: #a0a0a0;
`;

const ScrollArrow = styled.span`
  border: 3px solid transparent;
  ${(p) => (p.$left ? "border-left-width: 0; border-right" : "border-right-width: 0; border-left")}: 4px solid ${(p) => (p.$off ? "#ccc" : "#404040")};
`;

const DialogButtons = styled.div`
  display: flex;
  justify-content: flex-end;
  gap: 9px;
  margin-top: 9px;
`;
